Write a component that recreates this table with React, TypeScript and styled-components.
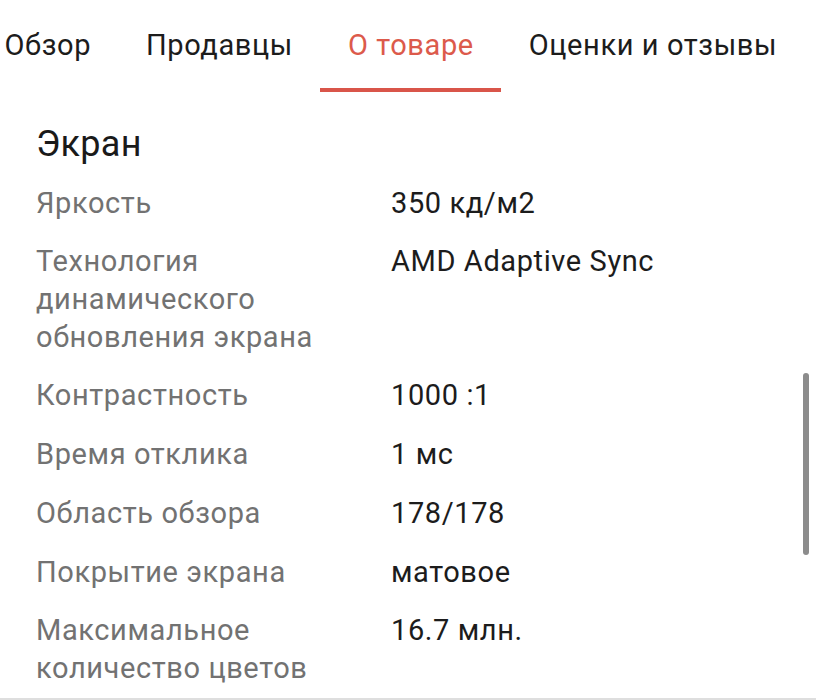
import React from "react";
import styled, { createGlobalStyle } from "styled-components";

const Global = createGlobalStyle`
  html, body { margin: 0; padding: 0; background: #ffffff; }
  body { font-family: Roboto, "Noto Sans", sans-serif; overflow: hidden; }
`;

const Page = styled.div`
  position: relative;
  width: 816px;
  height: 700px;
  overflow: hidden;
  background: #fff;
  border-bottom: 2px solid #dedede;
  box-sizing: border-box;
`;

const Tabs = styled.nav`
  display: flex;
  margin-left: -23px;
  height: 92px;
`;

const Tab = styled.div<{ $active?: boolean }>`
  display: flex;
  align-items: center;
  box-sizing: border-box;
  height: 92px;
  padding: 2px 27.5px 0;
  border-bottom: 4px solid ${(p) => (p.$active ? "#d9554a" : "transparent")};
  font-size: 29px;
  letter-spacing: 0.6px;
  color: ${(p) => (p.$active ? "#dc5a4b" : "#1c1c1c")};
  white-space: nowrap;
`;

const Section = styled.section`
  padding: 31px 0 0 36px;
`;

const Heading = styled.h2`
  margin: 0 0 9px;
  font-size: 36px;
  font-weight: 400;
  line-height: 42px;
  letter-spacing: 0.3px;
  color: #1a1a1a;
`;

const Row = styled.div`
  display: grid;
  grid-template-columns: 355px 1fr;
  padding: 10.6px 0;
  font-size: 29px;
  letter-spacing: 0.6px;
  line-height: 37.6px;
`;

const Label = styled.div`
  color: #727272;
  max-width: 322px;
`;

const Value = styled.div`
  color: #1c1c1c;
`;

const Scrollbar = styled.div`
  position: absolute;
  right: 7px;
  top: 373px;
  width: 6px;
  height: 182px;
  border-radius: 3px;
  background: #8c8c8c;
`;

const specs: [string, string][] = [
  ["Яркость", "350 кд/м2"],
  ["Технология динамического обновления экрана", "AMD Adaptive Sync"],
  ["Контрастность", "1000 :1"],
  ["Время отклика", "1 мс"],
  ["Область обзора", "178/178"],
  ["Покрытие экрана", "матовое"],
  ["Максимальное количество цветов", "16.7 млн."],
];

const tabs = ["Обзор", "Продавцы", "О товаре", "Оценки и отзывы"];

export default function App() {
  return (
    <Page>
      <Global />
      <Tabs>
        {tabs.map((t) => (
          <Tab key={t} $active={t === "О товаре"}>
            {t}
          </Tab>
        ))}
      </Tabs>
      <Section>
        <Heading>Экран</Heading>
        {specs.map(([l, v]) => (
          <Row key={l}>
            <Label>{l}</Label>
            <Value>{v}</Value>
          </Row>
        ))}
      </Section>
      <Scrollbar />
    </Page>
  );
}
